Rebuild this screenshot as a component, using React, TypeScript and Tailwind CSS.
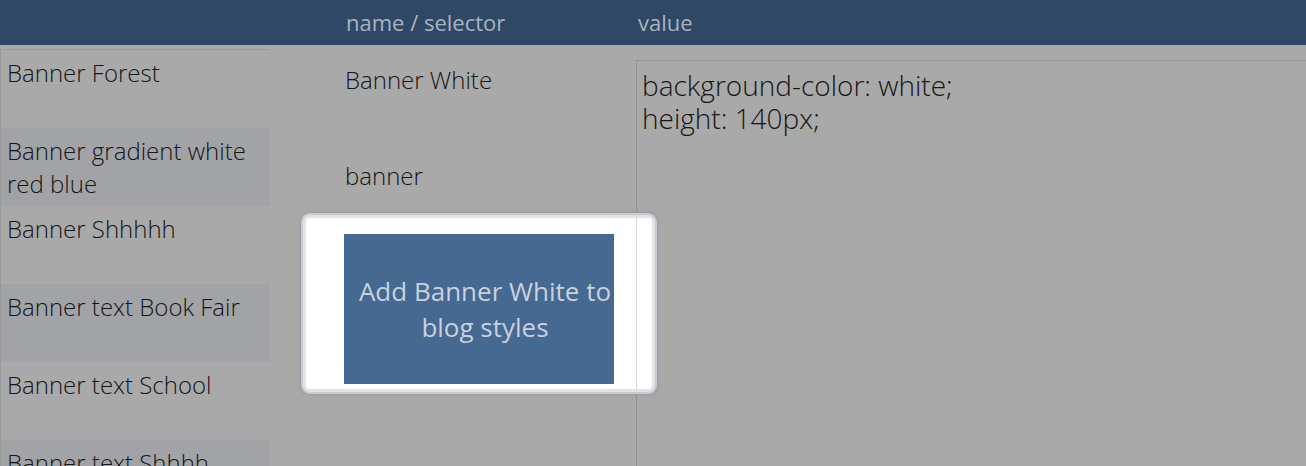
import React from "react";

const items = [
  { label: "Banner Forest", shaded: false },
  { label: "Banner gradient white red blue", shaded: true },
  { label: "Banner Shhhhh", shaded: false },
  { label: "Banner text Book Fair", shaded: true },
  { label: "Banner text School", shaded: false },
  { label: "Banner text Shhhh", shaded: true },
];

export default function App() {
  return (
    <div className="w-[1306px] h-[466px] overflow-hidden bg-[#a9a9a9] font-['Open_Sans',sans-serif] font-light text-[#161616]">
      <div className="h-[45px] bg-[#2e4866] flex items-center text-[22px] text-[#a9b3bf] font-normal">
        <div className="w-[344px] shrink-0" />
        <div className="w-[292px] shrink-0 pl-[2px] pb-[1px]">name / selector</div>
        <div className="pl-[2px] pb-[1px]">value</div>
      </div>
      <div className="flex">
        <div className="w-[270px] shrink-0 mt-[4px] border-l border-t border-[#9a9a9a] h-[420px]">
          {items.map((it) => (
            <div
              key={it.label}
              className={`h-[78px] pl-[6px] pt-[6px] pr-[16px] text-[24px] leading-[33px] ${it.shaded ? "bg-[#a2a3a7]" : ""}`}
            >
              {it.label}
            </div>
          ))}
        </div>
        <div className="w-[292px] shrink-0 ml-[74px] pt-[18px] text-[24px] leading-[33px] relative z-10">
          <div className="pl-[1px]">Banner White</div>
          <div className="pl-[1px] mt-[63px]">banner</div>
          <div className="relative mt-[42px] w-[270px]">
            <div className="absolute left-[-38px] right-[-38px] top-[-16px] bottom-[-5px] bg-white rounded-[4px] shadow-[0_0_0_3px_#e3e3e3,0_0_0_5px_#c4cbd7,0_0_3px_6px_rgba(140,140,140,0.45)]">
              <div className="absolute left-[330px] top-[-5px] bottom-[-5px] w-px bg-[#d9d9d9]" />
            </div>
            <div className="relative h-[150px] bg-[#456990] text-[#c8d1dd] font-normal text-[26px] leading-[36px] flex items-center justify-center text-center pl-[14px] pr-[2px]">
              Add Banner White to blog styles
            </div>
          </div>
        </div>
        <div className="flex-1 pt-[15px]">
          <div className="h-[420px] border-l border-t border-[#939393] pl-[5px] pt-[8px] text-[28px] leading-[33px]">
            <div>background-color: white;</div>
            <div>height: 140px;</div>
          </div>
        </div>
      </div>
    </div>
  );
}
